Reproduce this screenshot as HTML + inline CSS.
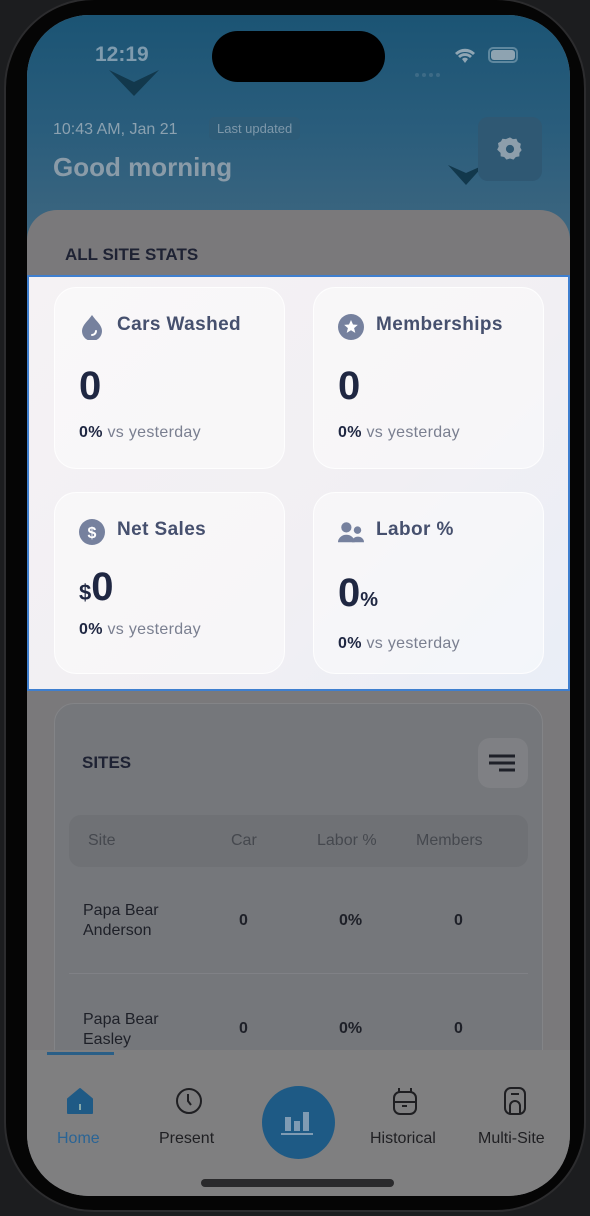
<!DOCTYPE html>
<html><head><meta charset="utf-8"><style>
*{margin:0;padding:0;box-sizing:border-box}
body{width:590px;height:1216px;background:#1c1d1f;position:relative;overflow:hidden;font-family:"Liberation Sans",sans-serif}
.phone{position:absolute;left:4px;top:-2px;width:582px;height:1214px;border-radius:90px;background:#050505;border:2px solid #2c2c2e}
.screen{position:absolute;left:27px;top:15px;width:543px;height:1181px;border-radius:62px;overflow:hidden;background:#77787c}
.hdr{position:absolute;left:0;top:0;width:543px;height:230px;background:linear-gradient(180deg,#1b5474 0%,#2a5d7c 50%,#3f6780 100%)}
.island{position:absolute;left:185px;top:16px;width:173px;height:51px;border-radius:26px;background:#000}
.time{position:absolute;left:68px;top:28px;color:#7f9bae;font-size:21px;font-weight:bold}
.chev{position:absolute}
.sheet{position:absolute;left:0;top:195px;width:543px;height:900px;border-radius:30px 30px 0 0;background:#7a797b}
.title{position:absolute;left:38px;top:230px;font-size:17px;font-weight:bold;color:#1e2233}
.stats{position:absolute;left:0;top:260px;width:543px;height:416px;background:linear-gradient(135deg,#f5f2f4,#f1eff3 60%,#e9eef7);border:2px solid #3f7fcf}
.card{position:absolute;width:231px;height:182px;border-radius:22px;background:rgba(255,255,255,.45);border:1px solid rgba(255,255,255,.8)}
.card .lbl{position:absolute;left:62px;top:26px;font-size:19px;font-weight:bold;color:#46506e;letter-spacing:.4px}
.card .ic{position:absolute;left:24px;top:26px;width:26px;height:26px}
.card .val{position:absolute;left:24px;top:76px;font-size:40px;font-weight:bold;color:#1f2742}
.card .sub{position:absolute;left:24px;top:136px;font-size:16px;color:#7a7f90;letter-spacing:.3px}
.card .sub b{color:#1f2742}
.sites{position:absolute;left:27px;top:688px;width:489px;height:420px;border-radius:20px;border:1px solid #838487;background:#75777b}
.nav{position:absolute;left:0;top:1035px;width:543px;height:146px;background:#7f7f80}
.nl{position:absolute;top:1115px;font-size:16px;color:#1f1f22}
</style></head><body>
<div class="phone"></div>
<div class="screen">
 <div class="hdr"></div>
 <div class="island"></div>
 <div class="time">12:19</div>
 <svg class="chev" style="left:82px;top:55px" width="50" height="28"><path d="M0 0 L25 26 L50 0 L25 12Z" fill="#12384c"/></svg>
 <svg class="chev" style="left:421px;top:150px" width="36" height="22"><path d="M0 0 L18 20 L36 0 L18 8Z" fill="#12384c"/></svg>
 <div style="position:absolute;left:388px;top:58px;width:28px;height:8px;display:flex;gap:3px"><i style="width:4px;height:4px;border-radius:2px;background:#3d6b86"></i><i style="width:4px;height:4px;border-radius:2px;background:#3d6b86"></i><i style="width:4px;height:4px;border-radius:2px;background:#3d6b86"></i><i style="width:4px;height:4px;border-radius:2px;background:#3d6b86"></i></div>
 <svg style="position:absolute;left:427px;top:31px" width="22" height="18" viewBox="0 0 22 18"><path d="M11 17l3-4a4 4 0 0 0-6 0z M11 6a11 11 0 0 1 8 3l2-2a14 14 0 0 0-20 0l2 2a11 11 0 0 1 8-3z M11 10a7 7 0 0 1 5 2l2-2a10 10 0 0 0-14 0l2 2a7 7 0 0 1 5-2z" fill="#90a6b4"/></svg>
 <div style="position:absolute;left:461px;top:32px;width:30px;height:16px;border:2px solid #5f889f;border-radius:5px;padding:1px"><div style="width:100%;height:100%;background:#8ea3b1;border-radius:3px"></div></div>
 <div style="position:absolute;left:26px;top:106px;font-size:16px;color:#8ba1b0">10:43 AM, Jan 21</div>
 <div style="position:absolute;left:182px;top:102px;padding:4px 8px;border-radius:5px;background:#2d5b77;font-size:13px;color:#7e98aa">Last updated</div>
 <div style="position:absolute;left:26px;top:137px;font-size:26px;font-weight:bold;color:#8a9ba8">Good morning</div>
 <div style="position:absolute;left:451px;top:102px;width:64px;height:64px;border-radius:10px;background:#2f5873"></div>
 <svg style="position:absolute;left:469px;top:120px" width="28" height="28" viewBox="0 0 24 24"><path d="M12 2l2.5 1.5 3-.3 1.2 2.8 2.6 1.5-.6 3 1.3 2.5-1.9 2.3-.1 3-3 .6-2 2.2-3-1-3 1-2-2.2-3-.6-.1-3L1 12.5l1.3-2.5-.6-3 2.6-1.5L5.5 3.2l3 .3z" fill="#8d9eab"/><circle cx="12" cy="12" r="3.5" fill="#2f5873"/></svg>
 <div class="sheet"></div>
 <div class="title">ALL SITE STATS</div>
 <div class="stats">
  <div class="card" style="left:25px;top:10px">
   <svg class="ic" viewBox="0 0 26 26"><path d="M13 1C9 7 3 11 3 17a10 10 0 0 0 20 0c0-6-6-10-10-16z" fill="#76819e"/><path d="M17 17a4 4 0 0 1-4 4" stroke="#fff" stroke-width="2" fill="none" stroke-linecap="round"/></svg>
   <div class="lbl">Cars Washed</div><div class="val">0</div><div class="sub"><b>0%</b> vs yesterday</div></div>
  <div class="card" style="left:284px;top:10px">
   <svg class="ic" viewBox="0 0 26 26"><circle cx="13" cy="13" r="13" fill="#76819e"/><path d="M13 6l2 4.5 4.8.4-3.7 3.2 1.2 4.8L13 16.3 8.7 18.9l1.2-4.8-3.7-3.2 4.8-.4z" fill="#fff"/></svg>
   <div class="lbl">Memberships</div><div class="val">0</div><div class="sub"><b>0%</b> vs yesterday</div></div>
  <div class="card" style="left:25px;top:215px">
   <svg class="ic" viewBox="0 0 26 26"><circle cx="13" cy="13" r="13" fill="#76819e"/><text x="13" y="19" text-anchor="middle" font-size="16" font-weight="bold" fill="#fff" font-family="Liberation Sans">$</text></svg>
   <div class="lbl">Net Sales</div><div class="val" style="top:72px"><span style="font-size:22px">$</span>0</div><div class="sub" style="top:128px"><b>0%</b> vs yesterday</div></div>
  <div class="card" style="left:284px;top:215px">
   <svg class="ic" viewBox="0 0 28 26"><circle cx="9" cy="8" r="5.5" fill="#76819e"/><path d="M0 24a9 8 0 0 1 18 0z" fill="#76819e"/><circle cx="21" cy="11" r="4" fill="#76819e"/><path d="M15 24a6.5 6 0 0 1 13 0z" fill="#76819e"/></svg>
   <div class="lbl">Labor %</div><div class="val" style="top:78px">0<span style="font-size:20px">%</span></div><div class="sub" style="top:142px"><b>0%</b> vs yesterday</div></div>
 </div>
 <div class="sites"></div>
 <div style="position:absolute;left:55px;top:738px;font-size:17px;font-weight:bold;color:#1e2233">SITES</div>
 <div style="position:absolute;left:451px;top:723px;width:50px;height:50px;border-radius:12px;background:#7f8084"></div>
 <svg style="position:absolute;left:461px;top:738px" width="30" height="22"><path d="M1 3h26M1 10h26M11 17h16" stroke="#1e2028" stroke-width="3"/></svg>
 <div style="position:absolute;left:42px;top:800px;width:459px;height:52px;border-radius:12px;background:#6f7175"></div>
 <div style="position:absolute;left:61px;top:817px;font-size:16px;color:#45484e">Site</div>
 <div style="position:absolute;left:204px;top:817px;font-size:16px;color:#45484e">Car</div>
 <div style="position:absolute;left:290px;top:817px;font-size:16px;color:#45484e">Labor %</div>
 <div style="position:absolute;left:389px;top:817px;font-size:16px;color:#45484e">Members</div>
 <div style="position:absolute;left:56px;top:886px;font-size:16px;line-height:20px;color:#1e2028">Papa Bear<br>Anderson</div>
 <div style="position:absolute;left:212px;top:897px;font-size:16px;font-weight:bold;color:#1e2028">0</div>
 <div style="position:absolute;left:312px;top:897px;font-size:16px;font-weight:bold;color:#1e2028">0%</div>
 <div style="position:absolute;left:427px;top:897px;font-size:16px;font-weight:bold;color:#1e2028">0</div>
 <div style="position:absolute;left:42px;top:958px;width:459px;height:1px;background:#808186"></div>
 <div style="position:absolute;left:56px;top:995px;font-size:16px;line-height:20px;color:#1e2028">Papa Bear<br>Easley</div>
 <div style="position:absolute;left:212px;top:1005px;font-size:16px;font-weight:bold;color:#1e2028">0</div>
 <div style="position:absolute;left:312px;top:1005px;font-size:16px;font-weight:bold;color:#1e2028">0%</div>
 <div style="position:absolute;left:427px;top:1005px;font-size:16px;font-weight:bold;color:#1e2028">0</div>
 <div class="nav"></div>
 <div style="position:absolute;left:20px;top:1037px;width:67px;height:3px;background:#2a5f87"></div>
 <svg style="position:absolute;left:39px;top:1072px" width="28" height="28" viewBox="0 0 28 28"><path d="M2 12L14 2l12 10v14H2z" fill="#1f5a85" stroke="#1f5a85" stroke-linejoin="round" stroke-width="2"/><rect x="13" y="17" width="2" height="6" fill="#8aa"/></svg>
 <div class="nl" style="left:30px;color:#2a6495">Home</div>
 <svg style="position:absolute;left:148px;top:1072px" width="28" height="28" viewBox="0 0 28 28"><circle cx="14" cy="14" r="12" fill="none" stroke="#1f1f22" stroke-width="2"/><path d="M13 7v7l3 4" fill="none" stroke="#1f1f22" stroke-width="2"/></svg>
 <div class="nl" style="left:132px">Present</div>
 <div style="position:absolute;left:235px;top:1071px;width:73px;height:73px;border-radius:50%;background:#1e5a85"></div>
 <svg style="position:absolute;left:254px;top:1092px" width="34" height="30"><rect x="4" y="10" width="6" height="14" fill="#7f9bb3"/><rect x="13" y="14" width="6" height="10" fill="#7f9bb3"/><rect x="22" y="5" width="6" height="19" fill="#7f9bb3"/><rect x="0" y="26" width="32" height="2" fill="#7f9bb3"/></svg>
 <svg style="position:absolute;left:364px;top:1070px" width="28" height="32" viewBox="0 0 28 32"><rect x="3" y="7" width="22" height="22" rx="6" fill="none" stroke="#1f1f22" stroke-width="2"/><path d="M3 17h22M8 7V3M20 7V3M11 21h5" stroke="#1f1f22" stroke-width="2"/></svg>
 <div class="nl" style="left:343px">Historical</div>
 <svg style="position:absolute;left:474px;top:1070px" width="28" height="32" viewBox="0 0 28 32"><rect x="4" y="3" width="20" height="26" rx="6" fill="none" stroke="#1f1f22" stroke-width="2"/><path d="M10 9h8M9 29v-8a5 5 0 0 1 10 0v8" fill="none" stroke="#1f1f22" stroke-width="2"/></svg>
 <div class="nl" style="left:451px">Multi-Site</div>
 <div style="position:absolute;left:174px;top:1164px;width:193px;height:8px;border-radius:4px;background:#2a2a2c"></div>
</div>
</body></html>
